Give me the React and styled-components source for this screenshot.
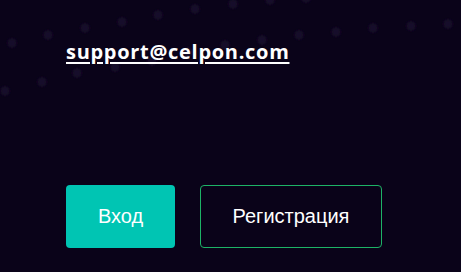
import React from "react";
import styled, { createGlobalStyle } from "styled-components";

const Global = createGlobalStyle`
  html, body { margin: 0; padding: 0; background: #0a0319; }
  body { width: 461px; height: 272px; overflow: hidden; }
`;

const Page = styled.div`
  position: relative;
  width: 461px;
  height: 272px;
  background: #0a0319;
  overflow: hidden;
`;

const Dots = styled.svg`
  position: absolute;
  left: 0;
  top: 0;
  width: 461px;
  height: 120px;
  pointer-events: none;
`;

const Content = styled.div`
  position: relative;
  display: flex;
  flex-direction: column;
  padding: 39px 0 0 66px;
`;

const Email = styled.a`
  font-family: "Open Sans", sans-serif;
  font-weight: 700;
  font-size: 20px;
  letter-spacing: 0.7px;
  line-height: 26px;
  color: #ffffff;
  text-decoration: underline;
  text-decoration-thickness: 2px;
  text-underline-offset: 3px;
  align-self: flex-start;
`;

const Actions = styled.div`
  display: flex;
  gap: 25px;
  margin-top: 120px;
`;

const Button = styled.button`
  box-sizing: border-box;
  height: 63px;
  width: ${(p) => p.$w}px;
  border-radius: 4px;
  font-family: "Liberation Sans", Arial, sans-serif;
  font-size: 20px;
  color: #ffffff;
  background: ${(p) => (p.$primary ? "#00c5b3" : "transparent")};
  border: ${(p) => (p.$primary ? "none" : "1px solid #1db366")};
  display: flex;
  align-items: center;
  justify-content: center;
  padding: 0;
  cursor: pointer;
`;

const dots = [
  [12, 43], [48, 35], [85, 28], [122, 22], [158, 15], [195, 9], [233, 4], [270, 0], [306, -2],
  [5, 91], [42, 82], [77, 73], [115, 67], [152, 61], [188, 52], [225, 45],
  [262, 40], [299, 35], [336, 32], [373, 28], [411, 26], [448, 24],
];

export default function App() {
  return (
    <Page>
      <Global />
      <Dots viewBox="0 0 461 120">
        <defs>
          <filter id="soft" x="-50%" y="-50%" width="200%" height="200%">
            <feGaussianBlur stdDeviation="1.8" />
          </filter>
        </defs>
        <g filter="url(#soft)">
          {dots.map(([x, y], i) => (
            <circle key={i} cx={x} cy={y} r="4.5" fill="#15102a" />
          ))}
        </g>
      </Dots>
      <Content>
        <Email href="#">support@celpon.com</Email>
        <Actions>
          <Button $primary $w={109}>Вход</Button>
          <Button $w={182}>Регистрация</Button>
        </Actions>
      </Content>
    </Page>
  );
}
